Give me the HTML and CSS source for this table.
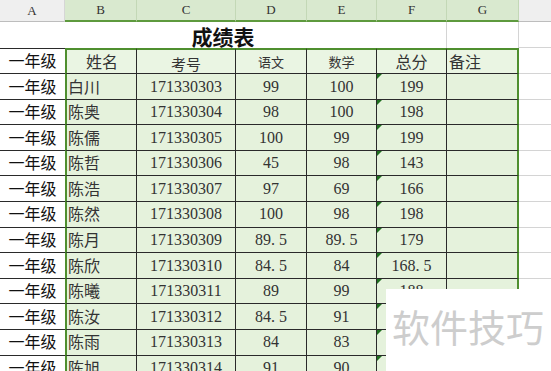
FILE: index.html
```html
<!DOCTYPE html>
<html lang="zh">
<head>
<meta charset="utf-8">
<title>成绩表</title>
<link rel="stylesheet" href="styles.css">
</head>
<body>
<div class="sheet">
  <div class="ch">A</div>
  <div class="ch sel">B</div>
  <div class="ch sel">C</div>
  <div class="ch sel">D</div>
  <div class="ch sel">E</div>
  <div class="ch sel">F</div>
  <div class="ch sel">G</div>
  <div class="ch last"></div>

  <div class="title">成绩表</div>
  <div class="tg"></div>
  <div class="th"></div>

  <div class="c a hd0">一年级</div>
  <div class="c b hd">姓名</div>
  <div class="c n hd low">考号</div>
  <div class="c n hd sm">语文</div>
  <div class="c n hd sm">数学</div>
  <div class="c n hd">总分</div>
  <div class="c g hd left">备注</div>
  <div class="h"></div>

  <div class="c a">一年级</div><div class="c b">白川</div><div class="c num">171330303</div><div class="c num">99</div><div class="c num">100</div><div class="c num f">199</div><div class="c g"></div><div class="h"></div>
  <div class="c a">一年级</div><div class="c b">陈奥</div><div class="c num">171330304</div><div class="c num">98</div><div class="c num">100</div><div class="c num f">198</div><div class="c g"></div><div class="h"></div>
  <div class="c a">一年级</div><div class="c b">陈儒</div><div class="c num">171330305</div><div class="c num">100</div><div class="c num">99</div><div class="c num f">199</div><div class="c g"></div><div class="h"></div>
  <div class="c a">一年级</div><div class="c b">陈哲</div><div class="c num">171330306</div><div class="c num">45</div><div class="c num">98</div><div class="c num f">143</div><div class="c g"></div><div class="h"></div>
  <div class="c a">一年级</div><div class="c b">陈浩</div><div class="c num">171330307</div><div class="c num">97</div><div class="c num">69</div><div class="c num f">166</div><div class="c g"></div><div class="h"></div>
  <div class="c a">一年级</div><div class="c b">陈然</div><div class="c num">171330308</div><div class="c num">100</div><div class="c num">98</div><div class="c num f">198</div><div class="c g"></div><div class="h"></div>
  <div class="c a">一年级</div><div class="c b">陈月</div><div class="c num">171330309</div><div class="c num">89<span class="dot">.</span>5</div><div class="c num">89<span class="dot">.</span>5</div><div class="c num f">179</div><div class="c g"></div><div class="h"></div>
  <div class="c a">一年级</div><div class="c b">陈欣</div><div class="c num">171330310</div><div class="c num">84<span class="dot">.</span>5</div><div class="c num">84</div><div class="c num f">168<span class="dot">.</span>5</div><div class="c g"></div><div class="h"></div>
  <div class="c a">一年级</div><div class="c b">陈曦</div><div class="c num">171330311</div><div class="c num">89</div><div class="c num">99</div><div class="c num f">188</div><div class="c g"></div><div class="h"></div>
  <div class="c a">一年级</div><div class="c b">陈汝</div><div class="c num">171330312</div><div class="c num">84<span class="dot">.</span>5</div><div class="c num">91</div><div class="c num f">175<span class="dot">.</span>5</div><div class="c g"></div><div class="h"></div>
  <div class="c a">一年级</div><div class="c b">陈雨</div><div class="c num">171330313</div><div class="c num">84</div><div class="c num">83</div><div class="c num f">167</div><div class="c g"></div><div class="h"></div>
  <div class="c a">一年级</div><div class="c b">陈旭</div><div class="c num">171330314</div><div class="c num">91</div><div class="c num">90</div><div class="c num f">181</div><div class="c g"></div><div class="h"></div>
</div>
<div class="watermark">软件技巧</div>
</body>
</html>
```

FILE: styles.css
```css
html, body {
  margin: 0;
  padding: 0;
  background: #ffffff;
  overflow: hidden;
  width: 551px;
  height: 371px;
}
body {
  position: relative;
  font-family: "Noto Sans CJK SC", "Liberation Sans", sans-serif;
  color: #222;
}
.sheet {
  display: grid;
  grid-template-columns: 65px 72px 99px 71px 70px 70px 72px 32px;
  grid-template-rows: 22px 26px 26px repeat(12, 25.6px);
  width: 551px;
}
.sheet > div {
  box-sizing: border-box;
  display: flex;
  align-items: center;
  justify-content: center;
  white-space: nowrap;
  overflow: hidden;
  line-height: 1.1;
}
.ch {
  background: #efefef;
  border-right: 1px solid #d6d6d6;
  border-bottom: 1px solid #bdbdbd;
  font-family: "Liberation Serif", serif;
  font-size: 13px;
  color: #333;
  padding-top: 1px;
}
.ch.sel {
  background: #d9e9cf;
  border-right: 1px solid #c3d8b6;
  border-bottom: 2px solid #5e9a3e;
}
.ch.last {
  border-right: none;
}
.sheet > .title {
  grid-column: 1 / span 6;
  font-size: 21px;
  line-height: 1;
  font-weight: bold;
  color: #111;
  border-right: 1px solid #d4d4d4;
  padding-top: 2px;
  overflow: visible;
}
.tg {
  border-right: 1px solid #d4d4d4;
}
.th {
  border-bottom: 1px solid #d4d4d4;
}
.c {
  border-right: 1px solid #2a2a2a;
  border-bottom: 1px solid #2a2a2a;
  background: #e5f2dc;
  font-size: 16px;
  color: #333;
}
.c.a {
  background: #ffffff;
  border-right: none;
  color: #111;
  font-size: 16px;
}
.c.b {
  border-left: 2px solid #4f8f2f;
  justify-content: flex-start;
  padding-left: 1px;
}
.c.g {
  border-right: 2px solid #4f8f2f;
}
.c.hd {
  border-top: 2px solid #4f8f2f;
  background: #eaf5e3;
}
.c.hd0 {
  border-top: 1px solid #2a2a2a;
}
.c.b.hd {
  justify-content: center;
}
.c.low {
  align-items: flex-end;
  padding-bottom: 1px;
  font-size: 15px;
}
.c.sm {
  font-size: 13px;
  padding-top: 2px;
}
.c.left {
  justify-content: flex-start;
  padding-left: 2px;
}
.num {
  font-family: "Liberation Serif", "Noto Sans CJK SC", serif;
  font-size: 16px;
  color: #333;
}
.dot {
  padding-right: 4px;
}
.f {
  position: relative;
}
.f::before {
  content: "";
  position: absolute;
  left: 0;
  top: 0;
  border-top: 5px solid #1f6e1f;
  border-right: 5px solid transparent;
}
.h {
  border-bottom: 1px solid #d4d4d4;
}
.watermark {
  position: absolute;
  left: 386px;
  top: 289px;
  width: 165px;
  height: 82px;
  background: #ffffff;
  color: #cdcdcd;
  font-family: "Noto Sans CJK SC", sans-serif;
  font-size: 38px;
  line-height: 38px;
  padding: 18px 0 0 6px;
  box-sizing: border-box;
  white-space: nowrap;
}
```
